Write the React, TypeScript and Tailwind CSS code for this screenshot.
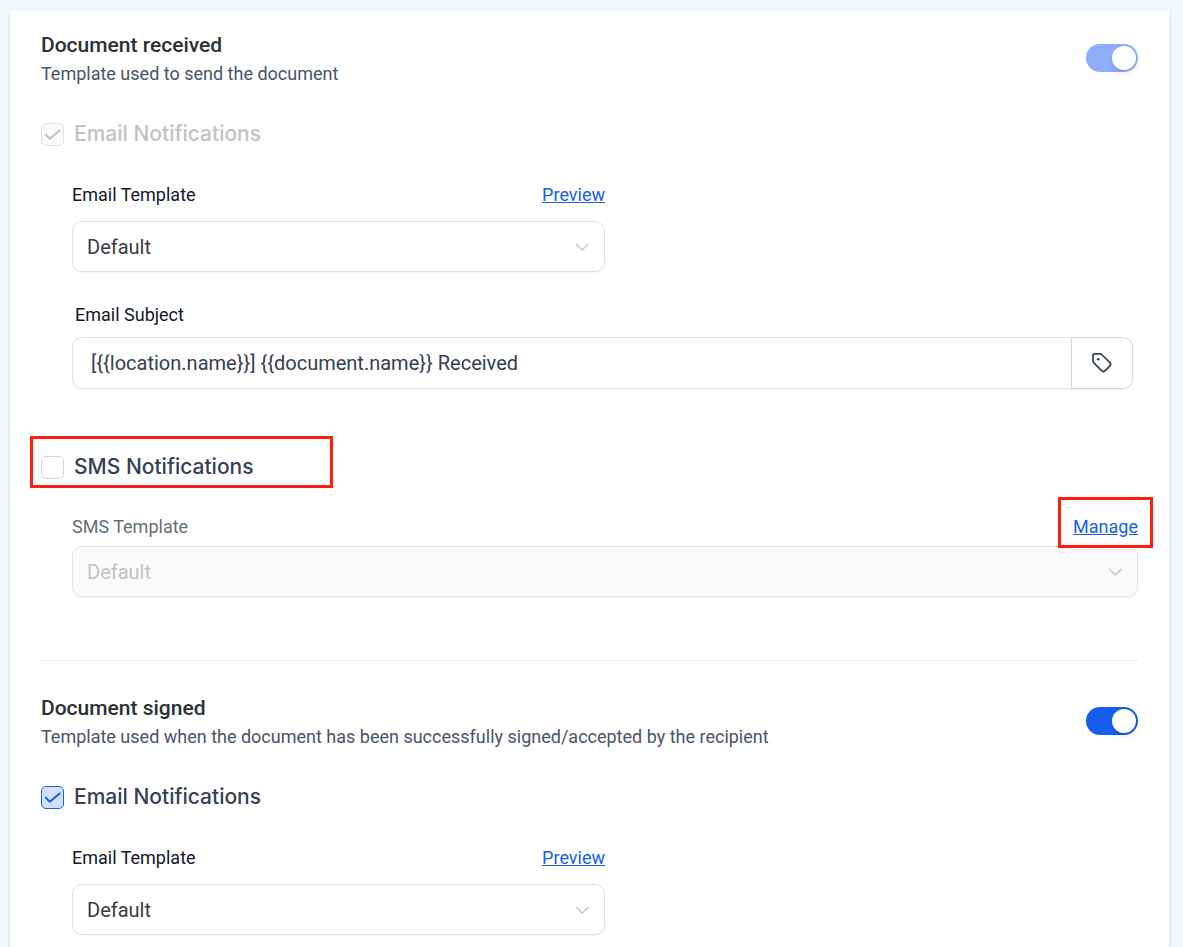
import { useId, useState } from 'react'
import type { ReactNode } from 'react'

interface SelectFieldProps {
  id: string
  disabled?: boolean
}

function SelectField({ id, disabled }: SelectFieldProps) {
  return (
    <div className="relative">
      <select
        id={id}
        disabled={disabled}
        className="block h-[51px] w-full appearance-none rounded-[10px] border border-[#dfe1e6] bg-white px-[14px] text-xl text-[#3a3a3f] opacity-100 shadow-xs disabled:bg-[#fafafc] disabled:text-[#c2c2c2]"
      >
        <option>Default</option>
      </select>
      <svg
        className="pointer-events-none absolute top-[18px] right-[15px] h-4 w-4 text-[#c2c2c2]"
        fill="none"
        stroke="currentColor"
        viewBox="0 0 16 16"
      >
        <path strokeWidth={1.3} d="M2 5l6.2 6 6.2-6" />
      </svg>
    </div>
  )
}

interface CheckboxProps {
  label: string
  defaultChecked?: boolean
  disabled?: boolean
}

function Checkbox({ label, defaultChecked, disabled }: CheckboxProps) {
  return (
    <label
      className={`flex w-fit items-center gap-[10px] font-[Inter,sans-serif] text-[21px] leading-7 font-medium ${
        disabled ? 'text-[#c2c2c2]' : 'text-[#344054]'
      }`}
    >
      <span className="relative flex">
        <input
          type="checkbox"
          defaultChecked={defaultChecked}
          disabled={disabled}
          className="peer h-[23px] w-[23px] appearance-none rounded-[5px] border border-[#d0d5dd] bg-white checked:border-[#155eef] checked:bg-[#d1e0ff] disabled:border-[#e0e0e6] disabled:bg-[#fafafc]"
        />
        <svg
          className={`pointer-events-none absolute inset-0 hidden h-[23px] w-[23px] peer-checked:block ${
            disabled ? 'text-[#c2c2c2]' : 'text-[#155eef]'
          }`}
          fill="none"
          stroke="currentColor"
          viewBox="0 0 23 23"
        >
          <path strokeLinecap="round" strokeLinejoin="round" strokeWidth={2} d="M4.8 11.6l4 4.2 9.8-8.4" />
        </svg>
      </span>
      {label}
    </label>
  )
}

interface SectionHeaderProps {
  title: string
  description: string
  disabled?: boolean
}

function SectionHeader({ title, description, disabled }: SectionHeaderProps) {
  return (
    <div className="flex items-start justify-between">
      <div className="flex flex-col gap-px">
        <h2 className="text-[21px] leading-7 font-medium text-[#2a3135]">{title}</h2>
        <p className="text-lg leading-7 text-[#475467]">{description}</p>
      </div>
      <input
        type="checkbox"
        role="switch"
        aria-label={title}
        defaultChecked
        disabled={disabled}
        className="mt-[13px] flex h-7 w-[52px] appearance-none items-center rounded-full bg-gray-300 px-0.5 before:h-6 before:w-6 before:rounded-full before:bg-white before:shadow-md checked:justify-end checked:bg-[#155eef] disabled:bg-[#8fadf8]"
      />
    </div>
  )
}

function TextLink({ children }: { children: ReactNode }) {
  return (
    <a href="#" className="text-lg leading-7 text-[#155eef] underline">
      {children}
    </a>
  )
}

function EmailTemplate() {
  const id = useId()
  return (
    <div className="w-1/2">
      <div className="mb-3 flex justify-between">
        <label htmlFor={id} className="text-lg leading-7 text-[#101828]">
          Email Template
        </label>
        <TextLink>Preview</TextLink>
      </div>
      <SelectField id={id} />
    </div>
  )
}

export default function App() {
  const [subject, setSubject] = useState('[{{location.name}}] {{document.name}} Received')

  return (
    <div className="flex min-h-screen flex-col bg-[#f0f6fa] pt-[11px] pr-[14px] pl-[10px] font-[Roboto,sans-serif]">
      <main className="flex-1 bg-white px-[31px] pt-5 shadow-[0_3px_4px_rgba(16,24,40,0.15)]">
        <section>
          <SectionHeader
            title="Document received"
            description="Template used to send the document"
            disabled
          />
          <div className="mt-8">
            <Checkbox label="Email Notifications" defaultChecked disabled />
          </div>
          <div className="mt-[33px] pl-[31px]">
            <EmailTemplate />
            <div className="mt-[29px] mr-[5px]">
              <label htmlFor="subject" className="mb-2 ml-[3px] block text-lg leading-7 text-[#101828]">
                Email Subject
              </label>
              <div className="flex h-[52px]">
                <input
                  id="subject"
                  type="text"
                  value={subject}
                  onChange={(e) => setSubject(e.target.value)}
                  className="min-w-0 flex-1 rounded-l-[10px] border border-r-0 border-[#dfe1e6] px-[18px] text-xl text-[#344054] shadow-xs"
                />
                <button
                  type="button"
                  aria-label="Insert custom value"
                  className="flex w-[62px] items-center justify-center rounded-r-[10px] border border-[#d0d5dd] text-[#344054] shadow-xs"
                >
                  <svg className="h-6 w-6" fill="none" stroke="currentColor" viewBox="0 0 24 24">
                    <path
                      strokeLinecap="round"
                      strokeLinejoin="round"
                      strokeWidth={1.7}
                      d="M3 4.8v5.3c0 .6.2 1.1.6 1.5l8.2 8.2c.9.9 2.2.9 3.1 0l5-5c.9-.9.9-2.2 0-3.1l-8.2-8.2c-.4-.4-.9-.6-1.5-.6H4.9c-1 0-1.9.9-1.9 1.9z"
                    />
                    <circle cx="8.2" cy="8.2" r="1.3" fill="currentColor" stroke="none" />
                  </svg>
                </button>
              </div>
            </div>
          </div>

          <div className="relative mt-16">
            <Checkbox label="SMS Notifications" />
            <div className="pointer-events-none absolute -top-[17px] -left-[11px] h-[52px] w-[303px] border-3 border-[#ff1d0c]" />
          </div>
          <div className="mt-8 pl-[31px]">
            <div className="mb-[5px] flex justify-between">
              <label htmlFor="sms-template" className="text-lg leading-7 text-[#5f6f77]">
                SMS Template
              </label>
              <div className="relative z-10">
                <TextLink>Manage</TextLink>
                <div className="pointer-events-none absolute -inset-x-[15px] -top-4 h-[51px] border-3 border-[#ff1d0c]" />
              </div>
            </div>
            <SelectField id="sms-template" disabled />
          </div>
        </section>

        <hr className="mt-[63px] mb-[33px] border-[#eaecf3]" />

        <section>
          <SectionHeader
            title="Document signed"
            description="Template used when the document has been successfully signed/accepted by the recipient"
          />
          <div className="mt-8">
            <Checkbox label="Email Notifications" defaultChecked />
          </div>
          <div className="mt-[33px] pl-[31px]">
            <EmailTemplate />
          </div>
        </section>
      </main>
    </div>
  )
}
